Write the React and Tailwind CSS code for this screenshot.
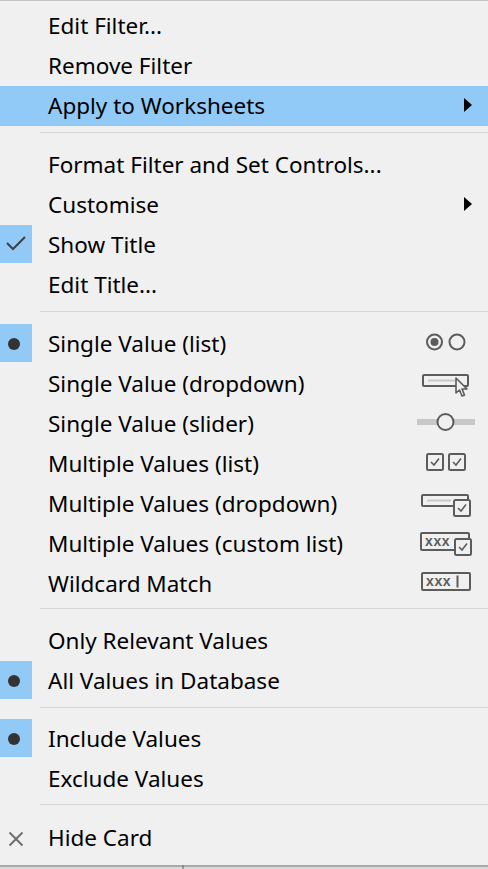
import React from "react";

const G = "#5c5c5c";
const L = "#c8c8c8";
const BG = "#f0f0f0";

function Arrow() {
  return (
    <svg width="10" height="16" viewBox="0 0 10 16">
      <path d="M1 1 L1 15 L9 8 Z" fill="#000" />
    </svg>
  );
}

function Dot() {
  return <div className="w-[12px] h-[12px] rounded-full bg-[#333333]" />;
}

function Check() {
  return (
    <svg width="24" height="18" viewBox="0 0 24 18">
      <path d="M3 8 L9 14 L21 2" fill="none" stroke="#404040" strokeWidth="2" />
    </svg>
  );
}

function XMark() {
  return (
    <svg width="16" height="16" viewBox="0 0 16 16">
      <path d="M1.5 1.5 L14.5 14.5 M14.5 1.5 L1.5 14.5" stroke="#6a6a6a" strokeWidth="1.8" fill="none" />
    </svg>
  );
}

function Icon({ kind }) {
  const box = (x, y) => (
    <g>
      <rect x={x} y={y} width="16" height="16" rx="1.5" fill={BG} stroke={G} strokeWidth="2" />
      <path d={`M${x + 4} ${y + 8} L${x + 7} ${y + 11} L${x + 12} ${y + 4.5}`} fill="none" stroke={G} strokeWidth="1.6" />
    </g>
  );
  return (
    <svg width="64" height="40" viewBox="0 0 64 40">
      {kind === "radio" && (
        <g>
          <circle cx="18.5" cy="18" r="7.5" fill="none" stroke={G} strokeWidth="2" />
          <circle cx="18.5" cy="18" r="4" fill={G} />
          <circle cx="41" cy="18" r="7.5" fill="none" stroke={G} strokeWidth="2" />
        </g>
      )}
      {kind === "dropdown" && (
        <g>
          <rect x="7" y="11" width="45" height="11" rx="1" fill="none" stroke={G} strokeWidth="2" />
          <line x1="12" y1="16.5" x2="39" y2="16.5" stroke={L} strokeWidth="2" />
          <path d="M40 14 L40 29 L43.5 26 L46 32 L48.5 31 L46 25 L51 25 Z" fill={BG} stroke={G} strokeWidth="1.6" strokeLinejoin="round" />
        </g>
      )}
      {kind === "slider" && (
        <g>
          <rect x="1" y="15" width="58" height="6" fill={L} />
          <circle cx="29.5" cy="18" r="8" fill={BG} stroke={G} strokeWidth="2" />
        </g>
      )}
      {kind === "checks" && (
        <g>
          {box(11, 10)}
          {box(33, 10)}
        </g>
      )}
      {kind === "mdropdown" && (
        <g>
          <rect x="6" y="11" width="46" height="11" rx="1" fill="none" stroke={G} strokeWidth="2" />
          <line x1="11" y1="16.5" x2="35" y2="16.5" stroke={L} strokeWidth="2" />
          {box(38, 16)}
        </g>
      )}
      {kind === "custom" && (
        <g>
          <rect x="5" y="9" width="48" height="17" rx="1" fill="none" stroke={G} strokeWidth="2" />
          <text x="9" y="21.5" fontFamily="Liberation Sans, sans-serif" fontWeight="bold" fontSize="14" fill={G} letterSpacing="0.6">xxx</text>
          {box(39, 15)}
        </g>
      )}
      {kind === "wildcard" && (
        <g>
          <rect x="6" y="9" width="48" height="17" rx="1" fill="none" stroke={G} strokeWidth="2" />
          <text x="10" y="21.5" fontFamily="Liberation Sans, sans-serif" fontWeight="bold" fontSize="14" fill={G} letterSpacing="0.6">xxx</text>
          <line x1="41.5" y1="11.5" x2="41.5" y2="23.5" stroke={G} strokeWidth="2" />
        </g>
      )}
    </svg>
  );
}

function Row({ label, mark, arrow, icon, active }) {
  return (
    <div className={`h-[40px] flex items-stretch ${active ? "bg-[#91c9f7]" : ""}`}>
      <div className="w-[48px] shrink-0">
        {mark && (
          <div className={`w-[32px] h-[38px] flex justify-center ${mark !== "x" ? "bg-[#91c9f7]" : ""} ${mark === "dot" ? "items-start pt-[14px] pr-[4px]" : "items-center"}`}>
            {mark === "dot" && <Dot />}
            {mark === "check" && <Check />}
            {mark === "x" && <div className="mt-[4px]"><XMark /></div>}
          </div>
        )}
      </div>
      <div className="flex-1 flex items-center text-black leading-none pt-[1px]">{label}</div>
      <div className="w-[72px] shrink-0 flex items-center">
        {arrow && <div className="ml-[47px] -mt-[2px]"><Arrow /></div>}
        {icon && <Icon kind={icon} />}
      </div>
    </div>
  );
}

function Sep({ h, top }) {
  return (
    <div className={`${h} pl-[40px]`}>
      <div className={`${top} h-px bg-[#d6d6d6]`} />
    </div>
  );
}

export default function App() {
  return (
    <div className="w-[488px] h-[869px] bg-[#f0f0f0] border-t border-[#c4c4c4] flex flex-col pt-[5px] font-['Noto_Sans',sans-serif] text-[22.5px] overflow-hidden">
      <Row label="Edit Filter..." />
      <Row label="Remove Filter" />
      <Row label="Apply to Worksheets" arrow active />
      <Sep h="h-[19px]" top="mt-[6px]" />
      <Row label="Format Filter and Set Controls..." />
      <Row label="Customise" arrow />
      <Row label="Show Title" mark="check" />
      <Row label="Edit Title..." />
      <Sep h="h-[19px]" top="mt-[6px]" />
      <Row label="Single Value (list)" mark="dot" icon="radio" />
      <Row label="Single Value (dropdown)" icon="dropdown" />
      <Row label="Single Value (slider)" icon="slider" />
      <Row label="Multiple Values (list)" icon="checks" />
      <Row label="Multiple Values (dropdown)" icon="mdropdown" />
      <Row label="Multiple Values (custom list)" icon="custom" />
      <Row label="Wildcard Match" icon="wildcard" />
      <Sep h="h-[17px]" top="mt-[4px]" />
      <Row label="Only Relevant Values" />
      <Row label="All Values in Database" mark="dot" />
      <Sep h="h-[18px]" top="mt-[6px]" />
      <Row label="Include Values" mark="dot" />
      <Row label="Exclude Values" />
      <Sep h="h-[19px]" top="mt-[5px]" />
      <Row label="Hide Card" mark="x" />
      <div className="flex-1" />
      <div className="h-[4px] shrink-0 flex flex-col">
        <div className="h-[2px] bg-[#a9a9a9] flex">
          <div className="w-[182px]" />
          <div className="w-[2px] bg-[#8a8a8a]" />
        </div>
        <div className="h-[2px] bg-[#d9d9d9] flex">
          <div className="w-[182px]" />
          <div className="w-[2px] bg-[#9a9a9a]" />
        </div>
      </div>
    </div>
  );
}
